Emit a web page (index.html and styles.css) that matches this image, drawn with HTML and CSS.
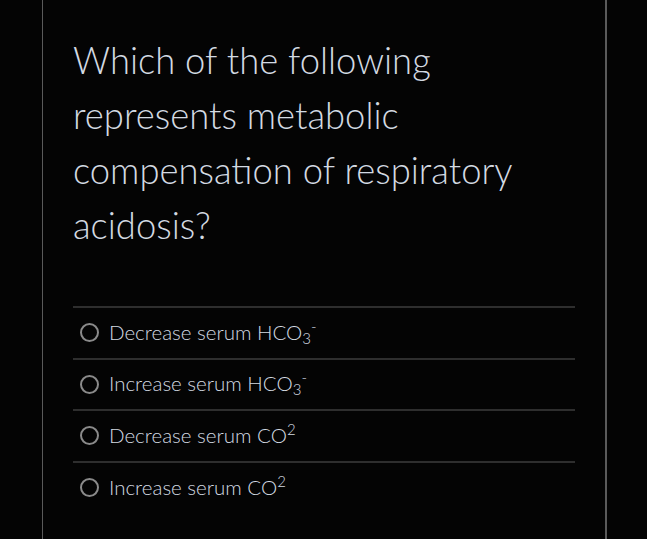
FILE: index.html
```html
<!DOCTYPE html>
<html>
<head>
<meta charset="utf-8">
<link rel="stylesheet" href="styles.css">
</head>
<body>
<div class="card">
  <h1 class="question">Which of the following represents metabolic compensation of respiratory acidosis?</h1>
  <ul class="options">
    <li class="option"><span class="radio"></span><span class="label">Decrease serum HCO<sub>3</sub><sup>-</sup></span></li>
    <li class="option"><span class="radio"></span><span class="label">Increase serum HCO<sub>3</sub><sup>-</sup></span></li>
    <li class="option"><span class="radio"></span><span class="label">Decrease serum CO<sup>2</sup></span></li>
    <li class="option"><span class="radio"></span><span class="label">Increase serum CO<sup>2</sup></span></li>
  </ul>
</div>
</body>
</html>
```
FILE: styles.css
```css
html, body {
  margin: 0;
  padding: 0;
  background: #040404;
  height: 100%;
  overflow: hidden;
}
body {
  font-family: Lato, "Open Sans", sans-serif;
  color: #d3dae2;
}
.card {
  margin-left: 42px;
  width: 565px;
  min-height: 100%;
  border-left: 1px solid #5a5a5a;
  border-right: 2px solid #5a5a5a;
  padding: 33px 30px 0 30px;
  box-sizing: border-box;
}
.question {
  margin: 0;
  font-weight: 300;
  font-size: 36.4px;
  line-height: 55px;
  width: 470px;
}
.options {
  list-style: none;
  margin: 53px 0 0 0;
  padding: 0;
  border-top: 2px solid #2e2e2e;
  width: 502px;
}
.option {
  display: flex;
  align-items: center;
  height: 49.6px;
  border-bottom: 2px solid #2e2e2e;
  padding-left: 7px;
  gap: 10px;
}
.option:last-child {
  border-bottom: none;
}
.radio {
  width: 15px;
  height: 15px;
  border: 2px solid #8a8a8a;
  border-radius: 50%;
  flex: none;
}
.label {
  font-size: 20.5px;
  font-weight: 300;
  position: relative;
  top: -1px;
}
sub, sup {
  font-size: 15px;
  line-height: 0;
}
sub { vertical-align: -4px; }
sup { vertical-align: 8px; }
```
